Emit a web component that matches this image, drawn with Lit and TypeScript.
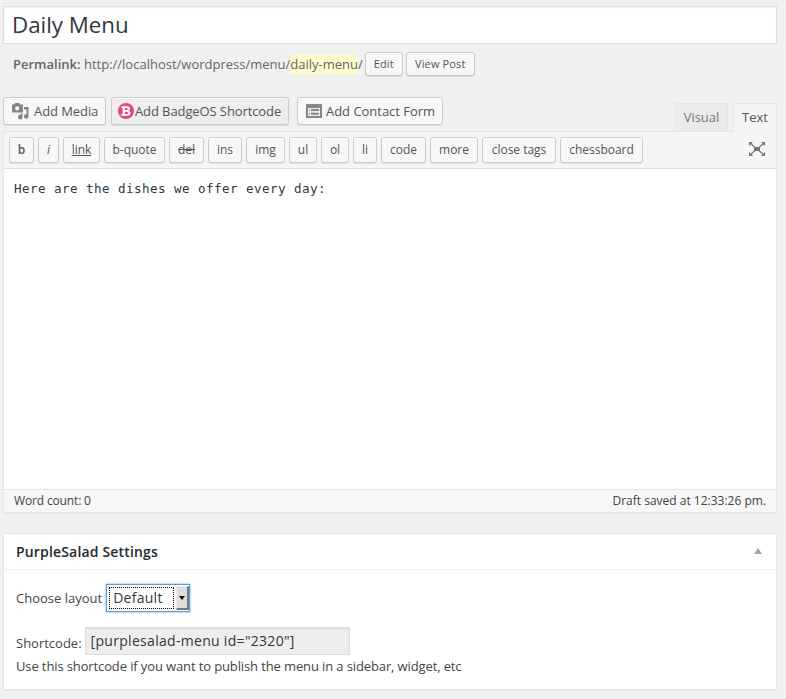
import { LitElement, html, css, svg } from "lit";
import { customElement, property } from "lit/decorators.js";
import { styleMap } from "lit/directives/style-map.js";

interface Tag {
  label: string;
  width: number;
  kind?: string;
}

const TAGS: Tag[] = [
  { label: "b", width: 25, kind: "bold" },
  { label: "i", width: 21, kind: "italic" },
  { label: "link", width: 37, kind: "under" },
  { label: "b-quote", width: 61 },
  { label: "del", width: 35, kind: "strike" },
  { label: "ins", width: 34 },
  { label: "img", width: 39 },
  { label: "ul", width: 28 },
  { label: "ol", width: 28 },
  { label: "li", width: 24 },
  { label: "code", width: 45 },
  { label: "more", width: 48 },
  { label: "close tags", width: 74 },
  { label: "chessboard", width: 83 },
];

const mediaIcon = svg`<svg width="18" height="18" viewBox="0 0 18 18" fill="#82878c">
  <path fill-rule="evenodd" d="M1 2.500h1.800L4 1h4l1.200 1.500H12V10.500H1zM6.200 4.300a2.100 2.100 0 1 0 0 4.200 2.100 2.100 0 0 0 0-4.200z"/>
  <path d="M13 5h4.500v9.500a2.300 2.300 0 1 1-2-2.300V7.500H13zM11.500 11.500v3.700a2.300 2.300 0 1 1-2-2.300v-1.400z"/>
</svg>`;

const badgeIcon = svg`<svg width="16" height="16" viewBox="0 0 16 16">
  <circle cx="8" cy="8" r="8" fill="#e8457f"/>
  <path fill="#fff" fill-rule="evenodd" d="M3.4 3.2h5.4c2.2 0 3.3.9 3.3 2.4 0 1-.6 1.8-1.600 2.100 1.300.3 2.100 1.100 2.100 2.400 0 1.800-1.400 2.700-3.600 2.700H3.400v-1.700h1.200V4.900H3.400zM6.900 4.900v2.200h1.400c.9 0 1.400-.4 1.400-1.100s-.5-1.100-1.400-1.100zM6.900 8.700v2.400h1.600c1 0 1.500-.4 1.500-1.200s-.5-1.200-1.500-1.200z"/>
</svg>`;

const formIcon = svg`<svg width="16" height="14" viewBox="0 0 16 14">
  <rect width="16" height="14" rx="0.500" fill="#888"/>
  <path fill="#eee" d="M2 4h12v8H2z"/>
  <path fill="#888" d="M3 5.500h1v1.500H3zM5 5h8v2H5zM3 9h1v1.500H3zM5 8.700h8v2H5z"/>
</svg>`;

const expandIcon = svg`<svg width="18" height="16" viewBox="0 0 18 16" fill="#72777c">
  <path d="M6 6h6v4H6zM1 1h4L1 5zM17 1v4l-4-4zM1 15v-4l4 4zM17 15h-4l4-4z"/>
  <path d="M2 2l5 4.500M16 2l-5 4.500M2 14l5-4.500M16 14l-5-4.500" stroke="#72777c" stroke-width="1.200" fill="none"/>
</svg>`;

@customElement("wp-button")
export class WpButton extends LitElement {
  @property({ reflect: true }) kind = "";
  static styles = css`
    :host {
      display: flex;
      align-items: center;
      justify-content: center;
      box-sizing: border-box;
      border: 1px solid #ccc;
      border-radius: 3px;
      background: #f7f7f7;
      box-shadow: inset 0 1px 0 #fff, 0 1px 0 rgba(0, 0, 0, 0.08);
      color: #555;
      white-space: nowrap;
      flex: none;
    }
    :host([kind="bold"]) { font-weight: 600; }
    :host([kind="italic"]) { font-style: italic; }
    :host([kind="under"]) { text-decoration: underline; }
    :host([kind="strike"]) { text-decoration: line-through; }
  `;
  render() {
    return html`<slot></slot>`;
  }
}

@customElement("app-root")
export class AppRoot extends LitElement {
  static styles = css`
    :host {
      display: block;
      box-sizing: border-box;
      height: 699px;
      padding: 6px 9px 0 3px;
      overflow: hidden;
      background: #f0f0f0;
      color: #444;
      font: 13px/19px "Open Sans", sans-serif;
    }
    * { box-sizing: border-box; }
    svg { display: block; flex: none; }
    .title {
      height: 38px;
      border: 1px solid #ddd;
      background: #fff;
      box-shadow: inset 0 1px 2px rgba(0, 0, 0, 0.07);
      padding: 1px 8px 0;
      font-size: 22.3px;
      line-height: 34px;
      color: #32373c;
    }
    .permalink {
      display: flex;
      align-items: center;
      height: 24px;
      margin-top: 8px;
      padding-left: 10px;
      color: #666;
      white-space: pre;
    }
    .permalink b { font-weight: 600; }
    .slug { background: #fffbcc; }
    .small { height: 24px; font-size: 11px; letter-spacing: 0.15px; padding-bottom: 1px; }
    .edit { width: 38px; margin-left: 2px; }
    .view { width: 69px; margin-left: 3px; }
    .tools {
      display: flex;
      height: 34px;
      margin-top: 21px;
    }
    .media {
      height: 28px;
      justify-content: flex-start;
      padding-left: 7px;
    }
    .add-media { width: 103px; gap: 5px; letter-spacing: -0.08px; }
    .add-badge { width: 178px; margin-left: 5px; padding-left: 6px; gap: 1px; background: #eee; letter-spacing: -0.1px; }
    .add-form { width: 146px; margin-left: 8px; padding-left: 8px; gap: 4px; letter-spacing: -0.03px; }
    .tabs {
      display: flex;
      margin: 6px 0 -1px auto;
      gap: 5px;
      position: relative;
    }
    .tab {
      height: 29px;
      border: 1px solid #e5e5e5;
      background: #ebebeb;
      color: #777;
      line-height: 27px;
      text-align: center;
    }
    .visual { width: 53px; height: 28px; border-bottom: 0; }
    .text { width: 44px; background: #f5f5f5; border-bottom: 0; color: #555; }
    .editor {
      height: 382px;
      border: 1px solid #e5e5e5;
      box-shadow: 0 1px 1px rgba(0, 0, 0, 0.04);
      background: #fff;
      display: flex;
      flex-direction: column;
    }
    .toolbar {
      display: flex;
      gap: 4px;
      height: 37px;
      padding: 5px 10px 0 5px;
      border-bottom: 1px solid #ddd;
      background: #f5f5f5;
    }
    .tag { height: 26px; font-size: 12px; padding-bottom: 1px; letter-spacing: -0.03px; }
    .expand { margin: 4px 0 0 auto; }
    .content {
      flex: 1;
      padding: 10px;
      font: 12.6px/20px "DejaVu Sans Mono", monospace;
      letter-spacing: 0.415px;
      color: #32373c;
    }
    .status {
      display: flex;
      justify-content: space-between;
      height: 23px;
      padding: 0 10px;
      border-top: 1px solid #e5e5e5;
      background: #f7f7f7;
      font-size: 12px;
      line-height: 22px;
    }
    .count { letter-spacing: -0.15px; }
    .box {
      height: 157px;
      margin-top: 20px;
      border: 1px solid #e5e5e5;
      box-shadow: 0 1px 1px rgba(0, 0, 0, 0.04);
      background: #fff;
    }
    .head {
      display: flex;
      align-items: center;
      justify-content: space-between;
      height: 36px;
      padding: 0 14px 0 12px;
      border-bottom: 1px solid #eee;
      color: #23282d;
      font-size: 14px;
      font-weight: 600;
      letter-spacing: 0.17px;
    }
    .arrow {
      border: 4px solid transparent;
      border-bottom: 6px solid #a0a5aa;
      border-top: 0;
      margin-top: -1px;
    }
    .row { display: flex; align-items: center; padding-left: 12px; height: 28px; }
    .layout { margin-top: 14px; }
    .select {
      display: flex;
      width: 84px;
      height: 28px;
      margin-left: 4px;
      padding: 1px 0 1px 2px;
      border: 1px solid #5b9dd9;
      box-shadow: 0 0 2px rgba(30, 140, 190, 0.8);
      background: #fff;
      color: #32373c;
      font-size: 14px;
      letter-spacing: 0.28px;
    }
    .value {
      width: 65px;
      height: 22px;
      margin-top: 1px;
      padding-left: 3px;
      border: 1px dotted #000;
      line-height: 20px;
    }
    .drop {
      display: flex;
      align-items: center;
      justify-content: center;
      width: 13px;
      margin: 0 0 0 auto;
      border: solid;
      border-width: 1px 2px 2px 1px;
      border-color: #eee #777 #777 #eee;
      background: #ddd;
    }
    .drop i {
      border: 3px solid transparent;
      border-top: 4px solid #000;
      border-bottom: 0;
    }
    .code { margin-top: 15px; }
    .field {
      width: 265px;
      height: 28px;
      margin-left: 3px;
      padding-left: 5px;
      border: 1px solid #ddd;
      background: #eee;
      box-shadow: inset 0 1px 2px rgba(0, 0, 0, 0.07);
      color: #32373c;
      font-size: 14px;
      line-height: 26px;
      letter-spacing: 0.3px;
    }
    .label { padding-top: 4px; }
    .hint { padding: 2px 12px; letter-spacing: -0.12px; }
  `;

  render() {
    return html`
      <div class="title">Daily Menu</div>
      <div class="permalink"><b>Permalink:</b><span> http://localhost/wordpress/menu/</span><span class="slug">daily-menu</span><span>/</span><wp-button class="small edit">Edit</wp-button><wp-button class="small view">View Post</wp-button></div>
      <div class="tools">
        <wp-button class="media add-media">${mediaIcon}<span>Add Media</span></wp-button>
        <wp-button class="media add-badge">${badgeIcon}<span>Add BadgeOS Shortcode</span></wp-button>
        <wp-button class="media add-form">${formIcon}<span>Add Contact Form</span></wp-button>
        <div class="tabs">
          <div class="tab visual">Visual</div>
          <div class="tab text">Text</div>
        </div>
      </div>
      <div class="editor">
        <div class="toolbar">
          ${TAGS.map(
            (t) => html`<wp-button class="tag" kind=${t.kind ?? ""} style=${styleMap({ width: `${t.width}px` })}>${t.label}</wp-button>`
          )}
          <div class="expand">${expandIcon}</div>
        </div>
        <div class="content">Here are the dishes we offer every day:</div>
        <div class="status"><span class="count">Word count: 0</span><span>Draft saved at 12:33:26 pm.</span></div>
      </div>
      <div class="box">
        <div class="head"><span>PurpleSalad Settings</span><i class="arrow"></i></div>
        <div class="row layout">
          <span>Choose layout</span>
          <div class="select"><span class="value">Default</span><span class="drop"><i></i></span></div>
        </div>
        <div class="row code">
          <span class="label">Shortcode:</span>
          <div class="field">[purplesalad-menu id="2320"]</div>
        </div>
        <div class="hint">Use this shortcode if you want to publish the menu in a sidebar, widget, etc</div>
      </div>
    `;
  }
}
